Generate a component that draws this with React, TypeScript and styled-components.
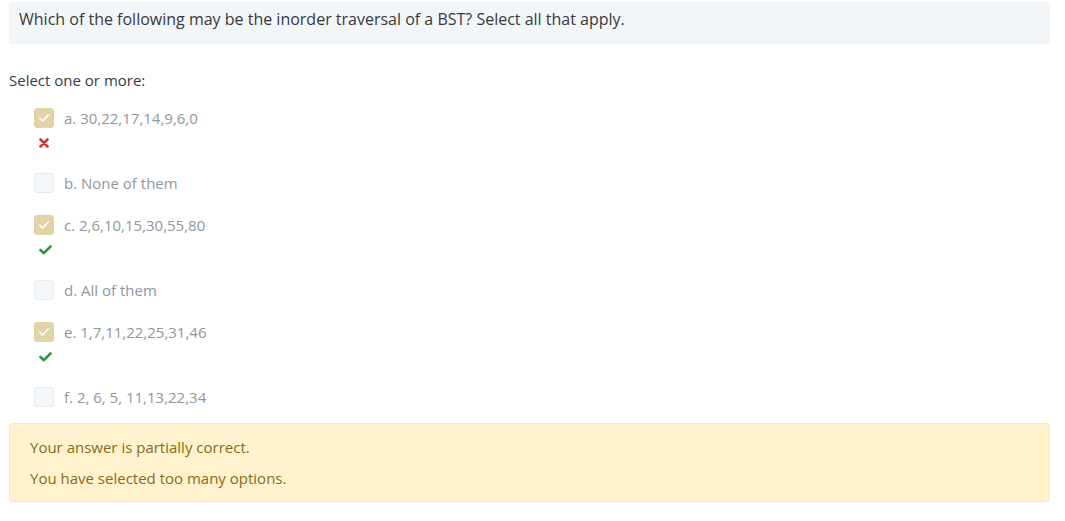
import React from 'react'
import styled, { createGlobalStyle } from 'styled-components'

const GlobalStyle = createGlobalStyle`
  html, body {
    margin: 0;
    padding: 0;
    background: #ffffff;
  }
  body {
    font-family: "Open Sans", "Liberation Sans", sans-serif;
    color: #373a3c;
  }
`

interface OptionData {
  label: string
  checked: boolean
  result?: 'right' | 'wrong'
}

const options: OptionData[] = [
  { label: 'a. 30,22,17,14,9,6,0', checked: true, result: 'wrong' },
  { label: 'b. None of them', checked: false },
  { label: 'c. 2,6,10,15,30,55,80', checked: true, result: 'right' },
  { label: 'd. All of them', checked: false },
  { label: 'e. 1,7,11,22,25,31,46', checked: true, result: 'right' },
  { label: 'f. 2, 6, 5, 11,13,22,34', checked: false },
]

const CrossIcon = () => (
  <svg width="10" height="10" viewBox="0 0 10 10">
    <path d="M1.5 1.5 L8.5 8.5 M8.5 1.5 L1.5 8.5" stroke="#d23a3a" strokeWidth="2.6" strokeLinecap="round" />
  </svg>
)

const TickIcon = () => (
  <svg width="13" height="10" viewBox="0 0 13 10">
    <path d="M1.5 5 L4.8 8.2 L11.5 1.5" fill="none" stroke="#2d9a3f" strokeWidth="2.6" strokeLinecap="round" strokeLinejoin="round" />
  </svg>
)

const BoxTick = () => (
  <svg width="12" height="10" viewBox="0 0 12 10">
    <path d="M1.5 5.2 L4.5 8 L10.5 1.8" fill="none" stroke="#ffffff" strokeWidth="1.6" strokeLinecap="round" strokeLinejoin="round" />
  </svg>
)

export default function App() {
  return (
    <Page>
      <GlobalStyle />
      <QuestionText>
        Which of the following may be the inorder traversal of a BST? Select all that apply.
      </QuestionText>
      <Prompt>Select one or more:</Prompt>
      <Answers>
        {options.map((o, i) => (
          <Option key={i}>
            <Row>
              <Checkbox checked={o.checked}>{o.checked && <BoxTick />}</Checkbox>
              <Label>{o.label}</Label>
            </Row>
            {o.result && (
              <Mark>{o.result === 'right' ? <TickIcon /> : <CrossIcon />}</Mark>
            )}
          </Option>
        ))}
      </Answers>
      <Feedback>
        <FeedbackLine>Your answer is partially correct.</FeedbackLine>
        <FeedbackLine>You have selected too many options.</FeedbackLine>
      </Feedback>
    </Page>
  )
}

const Page = styled.div`
  padding: 2px 15px 0 9px;
`

const QuestionText = styled.div`
  background: #f2f6f9;
  padding: 5px 10px 13px 10px;
  font-size: 16px;
  line-height: 24px;
  color: #373a3c;
`

const Prompt = styled.div`
  margin-top: 25px;
  font-size: 15px;
  line-height: 22px;
  color: #373a3c;
`

const Answers = styled.div`
  margin-top: 16px;
  padding-left: 25px;
`

const Option = styled.div`
  margin-bottom: 20px;
`

const Row = styled.div`
  display: flex;
  align-items: center;
  height: 22px;
`

const Checkbox = styled.span<{ checked: boolean }>`
  display: flex;
  align-items: center;
  justify-content: center;
  box-sizing: border-box;
  width: 20px;
  height: 20px;
  border-radius: 3px;
  background: ${p => (p.checked ? '#e2d3a6' : '#f5f8fa')};
  border: 1px solid ${p => (p.checked ? '#e2d3a6' : '#e7ebee')};
`

const Label = styled.span`
  margin-left: 10px;
  font-size: 15px;
  color: #90969d;
`

const Mark = styled.div`
  display: flex;
  align-items: center;
  height: 18px;
  margin-top: 5px;
  padding-left: 5px;
`

const Feedback = styled.div`
  margin-top: -5px;
  background: #fff2cc;
  border: 1px solid #fde9ae;
  border-radius: 3px;
  padding: 12px 20px 12px 20px;
`

const FeedbackLine = styled.div`
  font-size: 15px;
  line-height: 22px;
  color: #8a6a1c;
  & + & {
    margin-top: 9px;
  }
`
